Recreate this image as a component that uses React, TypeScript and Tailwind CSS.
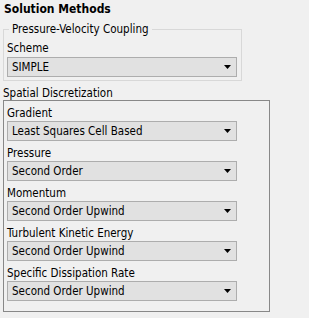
import React from "react";

function Arrow() {
  return (
    <svg width="7" height="4" viewBox="0 0 7 4" className="ml-auto mr-[5px] shrink-0">
      <polygon points="0,0 7,0 3.5,4" fill="#000" />
    </svg>
  );
}

function Select({ value }: { value: string }) {
  return (
    <div className="flex h-[20px] w-[230px] items-center border border-[#adadad] bg-[#e1e1e1] pl-[4px]">
      <span className="leading-[18px] whitespace-nowrap">{value}</span>
      <Arrow />
    </div>
  );
}

function Label({ text, h = "h-[20px]" }: { text: string; h?: string }) {
  return <div className={`${h} pt-[5px] leading-[14px] whitespace-nowrap`}>{text}</div>;
}

const rows: [string, string][] = [
  ["Gradient", "Least Squares Cell Based"],
  ["Pressure", "Second Order"],
  ["Momentum", "Second Order Upwind"],
  ["Turbulent Kinetic Energy", "Second Order Upwind"],
  ["Specific Dissipation Rate", "Second Order Upwind"],
];

export default function App() {
  return (
    <div className="h-[318px] w-[309px] overflow-hidden bg-[#f0f0f0] text-[11.5px] text-black font-['DejaVu_Sans_Condensed','DejaVu_Sans',sans-serif]">
      <div className="h-[22px] pl-[4px] text-[12px] font-bold leading-[18px]">Solution Methods</div>
      <fieldset className="ml-[3px] w-[239px] border border-[#d8d8d8] pb-[3px] pl-[3px]">
        <legend className="ml-[2px] px-[3px] leading-[14px]">Pressure-Velocity Coupling</legend>
        <Label text="Scheme" h="h-[21px]" />
        <Select value="SIMPLE" />
      </fieldset>
      <div className="h-[19px] pl-[3px] pt-[5px] leading-[14px]">Spatial Discretization</div>
      <div className="ml-[3px] h-[212px] w-[267px] border border-[#888888] pl-[3px]">
        {rows.map(([l, v]) => (
          <div key={l}>
            <Label text={l} />
            <Select value={v} />
          </div>
        ))}
      </div>
    </div>
  );
}
